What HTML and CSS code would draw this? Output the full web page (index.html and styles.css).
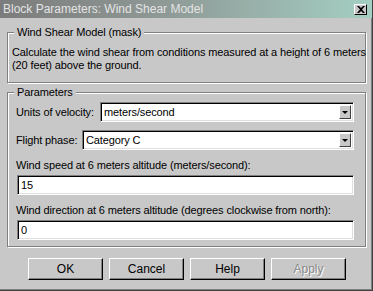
FILE: index.html
```html
<!DOCTYPE html>
<html lang="en">
<head>
    <meta charset="UTF-8">
    <title>Block Parameters: Wind Shear Model</title>
    <link rel="stylesheet" href="styles.css">
</head>
<body>
    <div class="window">
        <!-- Title bar -->
        <div class="titlebar">
            <span class="title">Block Parameters: Wind Shear Model</span>
            <span class="close-btn">
                <svg width="8" height="7" viewBox="0 0 8 7">
                    <path d="M0 0h2l2 2 2-2h2L5 3.5 8 7H6L4 5 2 7H0l3-3.5z" fill="#000"/>
                </svg>
            </span>
        </div>

        <div class="content">
            <!-- Description -->
            <fieldset class="group desc">
                <legend>Wind Shear Model (mask)</legend>
                <p>Calculate the wind shear from conditions measured at a height of 6 meters<br>(20 feet) above the ground.</p>
            </fieldset>

            <!-- Parameters -->
            <fieldset class="group params">
                <legend>Parameters</legend>
                <div class="row">
                    <label>Units of velocity:</label>
                    <div class="select"><span class="value">meters/second</span><span class="arrow"></span></div>
                </div>
                <div class="row row-second">
                    <label>Flight phase:</label>
                    <div class="select"><span class="value">Category C</span><span class="arrow"></span></div>
                </div>
                <div class="field-label">Wind speed at 6 meters altitude (meters/second):</div>
                <div class="text-input">15</div>
                <div class="field-label">Wind direction at 6 meters altitude (degrees clockwise from north):</div>
                <div class="text-input">0</div>
            </fieldset>

            <!-- Buttons -->
            <div class="buttons">
                <button type="button" class="btn">OK</button>
                <button type="button" class="btn">Cancel</button>
                <button type="button" class="btn">Help</button>
                <button type="button" class="btn disabled">Apply</button>
            </div>
        </div>
    </div>
</body>
</html>
```

FILE: styles.css
```css
body {
    margin: 0;
    padding: 0;
    font-family: "Liberation Sans", Arial, sans-serif;
    font-size: 11px;
    letter-spacing: -0.12px;
    color: #000;
}
.window {
    width: 373px;
    height: 291px;
    box-sizing: border-box;
    background-color: #c8c8c8;
    border-right: 1px solid #404040;
    border-bottom: 1px solid #404040;
    box-shadow: inset -1px -1px 0 #808080;
    overflow: hidden;
}
.titlebar {
    height: 18px;
    display: flex;
    align-items: center;
    justify-content: space-between;
    padding: 0 5px 0 3px;
    background: linear-gradient(to right, #7c7c7c, #8f9a97 45%, #a4cfc2);
}
.title {
    color: #e4e4e4;
    font-size: 12px;
    line-height: 16px;
    letter-spacing: 0;
}
.close-btn {
    width: 13px;
    height: 11px;
    box-sizing: border-box;
    display: flex;
    align-items: center;
    justify-content: center;
    background-color: #c8c8c8;
    border-top: 1px solid #fff;
    border-left: 1px solid #fff;
    border-right: 1px solid #000;
    border-bottom: 1px solid #000;
}
.content {
    padding: 0 6px 0 7px;
}
.group {
    margin: 0;
    min-width: 0;
    border: 1px solid #808080;
    box-shadow: 1px 1px 0 #fff, inset 1px 1px 0 #fff;
}
.group legend {
    padding: 0 3px;
    margin-left: 2px;
    line-height: 13px;
    background-color: #c8c8c8;
}
.desc {
    margin-top: 8px;
    padding: 7px 4px 10px 4px;
}
.desc p {
    margin: 0;
    line-height: 13px;
    white-space: nowrap;
}
.params {
    margin-top: 3px;
    padding: 3px 11px 6px 8px;
}
.params legend {
    margin-left: -2px;
}
.row {
    display: flex;
    align-items: center;
}
.row label {
    width: 84px;
    flex-shrink: 0;
    white-space: nowrap;
}
.row-second {
    margin-top: 8px;
}
.row-second label {
    width: 66px;
}
.select {
    flex: 1;
    height: 20px;
    box-sizing: border-box;
    display: flex;
    align-items: stretch;
    background-color: #fff;
    border-top: 1px solid #808080;
    border-left: 1px solid #808080;
    border-right: 1px solid #fff;
    border-bottom: 1px solid #fff;
    box-shadow: inset 1px 1px 0 #000, inset -1px -1px 0 #dfdfdf;
    padding: 2px 2px 2px 3px;
}
.select .value {
    flex: 1;
    line-height: 14px;
}
.arrow {
    width: 12px;
    box-sizing: border-box;
    background-color: #c8c8c8;
    border-top: 1px solid #fff;
    border-left: 1px solid #fff;
    border-right: 1px solid #404040;
    border-bottom: 1px solid #404040;
    display: flex;
    align-items: center;
    justify-content: center;
}
.arrow::after {
    content: "";
    border-left: 3px solid transparent;
    border-right: 3px solid transparent;
    border-top: 3px solid #000;
    margin-top: 1px;
}
.field-label {
    margin-top: 9px;
    line-height: 13px;
    white-space: nowrap;
}
.text-input {
    margin: 3px 0 0 1px;
    height: 20px;
    box-sizing: border-box;
    background-color: #fff;
    border-top: 1px solid #808080;
    border-left: 1px solid #808080;
    border-right: 1px solid #fff;
    border-bottom: 1px solid #fff;
    box-shadow: inset 1px 1px 0 #000, inset -1px -1px 0 #dfdfdf;
    padding: 2px 3px;
    line-height: 14px;
}
.buttons {
    display: flex;
    gap: 6px;
    margin-top: 11px;
    padding-left: 21px;
}
.btn {
    width: 75px;
    height: 22px;
    padding: 0;
    font-family: "Liberation Sans", Arial, sans-serif;
    font-size: 12px;
    color: #000;
    background-color: #c8c8c8;
    border-top: 1px solid #fff;
    border-left: 1px solid #fff;
    border-right: 1px solid #000;
    border-bottom: 1px solid #000;
    box-shadow: inset -1px -1px 0 #808080;
    border-radius: 0;
}
.btn.disabled {
    color: #8a8a8a;
    text-shadow: 1px 1px 0 #fff;
}
```
